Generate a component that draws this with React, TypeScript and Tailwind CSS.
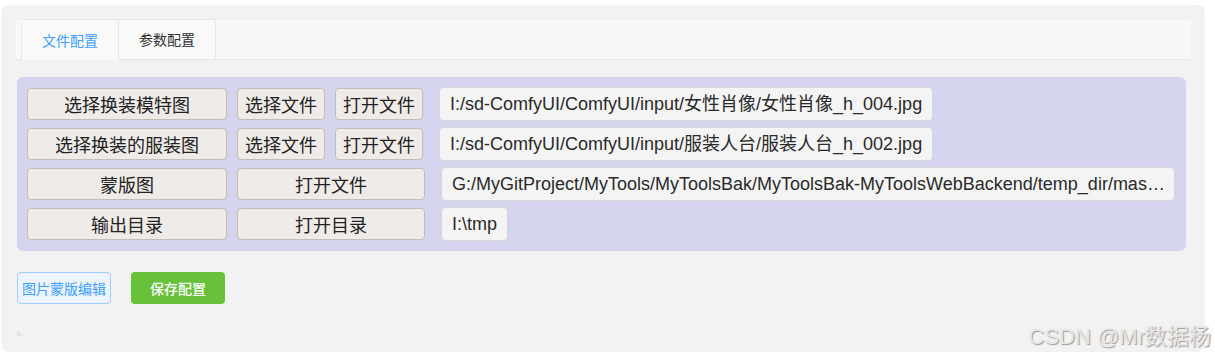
import React from "react";

const cjk = '"Noto Sans CJK SC", "Microsoft YaHei", sans-serif';
const mixed = '"Liberation Sans", "Noto Sans CJK SC", sans-serif';

function Btn({ w, children }: { w: string; children: React.ReactNode }) {
  return (
    <button
      className={`${w} h-[32px] shrink-0 rounded-[4px] border border-[#c3bdb6] bg-[#efebe8] text-[18px] leading-none text-[#222]`}
      style={{ fontFamily: cjk }}
    >
      {children}
    </button>
  );
}

function Field({ children, grow }: { children: React.ReactNode; grow?: boolean }) {
  return (
    <div
      className={`ml-[6px] flex h-[34px] items-center rounded-[4px] border border-[#d6d6d6] bg-[#f4f4f4] pl-[10px] text-[18px] text-[#2a2a2a] ${
        grow ? "min-w-0 flex-1 pr-[5px]" : "shrink-0 pr-[10px]"
      }`}
      style={{ fontFamily: mixed }}
    >
      <span className="truncate whitespace-nowrap leading-[24px]">{children}</span>
    </div>
  );
}

export default function App() {
  return (
    <div className="relative h-[356px] w-[1215px] overflow-hidden bg-white">
      <div className="ml-[1px] mt-[5px] h-[347px] w-[1204px] rounded-[8px] bg-[#f2f2f2] pl-[15px] pr-[14px] pt-[15px]">
        {/* Tabs header */}
        <div className="flex h-[40px] items-end border-b border-[#e4e7ed] bg-[#f8f8f8] pl-[5px]" style={{ fontFamily: cjk }}>
          <div className="flex h-[40px] rounded-t-[4px] border border-b-0 border-[#e4e7ed]">
            <div className="relative -mb-px flex h-[40px] w-[96px] items-center justify-center bg-[#f9f9f9] text-[14px] text-[#409eff]">
              文件配置
            </div>
            <div className="flex h-[39px] w-[97px] items-center justify-center border-l border-[#e4e7ed] bg-[#f9f9f9] text-[14px] text-[#303133]">
              参数配置
            </div>
          </div>
        </div>

        {/* Purple panel */}
        <div className="ml-[1px] mt-[17px] flex w-[1169px] flex-col gap-[6px] rounded-[6px] bg-[#d4d4ef] py-[10px] pl-[10px] pr-[11px]">
          <div className="flex items-center gap-[10px]">
            <Btn w="w-[200px]">选择换装模特图</Btn>
            <Btn w="w-[88px]">选择文件</Btn>
            <Btn w="w-[88px]">打开文件</Btn>
            <Field>I:/sd-ComfyUI/ComfyUI/input/女性肖像/女性肖像_h_004.jpg</Field>
          </div>
          <div className="flex items-center gap-[10px]">
            <Btn w="w-[200px]">选择换装的服装图</Btn>
            <Btn w="w-[88px]">选择文件</Btn>
            <Btn w="w-[88px]">打开文件</Btn>
            <Field>I:/sd-ComfyUI/ComfyUI/input/服装人台/服装人台_h_002.jpg</Field>
          </div>
          <div className="flex items-center gap-[10px]">
            <Btn w="w-[200px]">蒙版图</Btn>
            <Btn w="w-[188px]">打开文件</Btn>
            <Field grow>
              G:/MyGitProject/MyTools/MyToolsBak/MyToolsBak-MyToolsWebBackend/temp_dir/mask_image_20240101.png
            </Field>
          </div>
          <div className="flex items-center gap-[10px]">
            <Btn w="w-[200px]">输出目录</Btn>
            <Btn w="w-[188px]">打开目录</Btn>
            <Field>I:\tmp</Field>
          </div>
        </div>

        {/* Bottom buttons */}
        <div className="ml-[1px] mt-[21px] flex items-center gap-[20px]" style={{ fontFamily: cjk }}>
          <button className="flex h-[32px] w-[94px] items-center justify-center rounded-[4px] border border-[#a0cfff] bg-[#ecf5ff] text-[14px] text-[#409eff]">
            图片蒙版编辑
          </button>
          <button className="flex h-[32px] w-[94px] items-center justify-center rounded-[4px] bg-[#67c23a] text-[14px] font-medium text-white">
            保存配置
          </button>
        </div>

        <div className="ml-[1px] mt-[26px] h-0 w-0 border-l-[6px] border-t-[6px] border-l-[#e2e2e2] border-t-transparent" />
      </div>

      <div
        className="absolute bottom-[8px] right-[4px] text-[22px] font-normal leading-none text-[#e6e6e6] [text-shadow:1px_1px_1px_#9a9a9a]"
        style={{ fontFamily: mixed }}
      >
        CSDN @Mr数据杨
      </div>
    </div>
  );
}
